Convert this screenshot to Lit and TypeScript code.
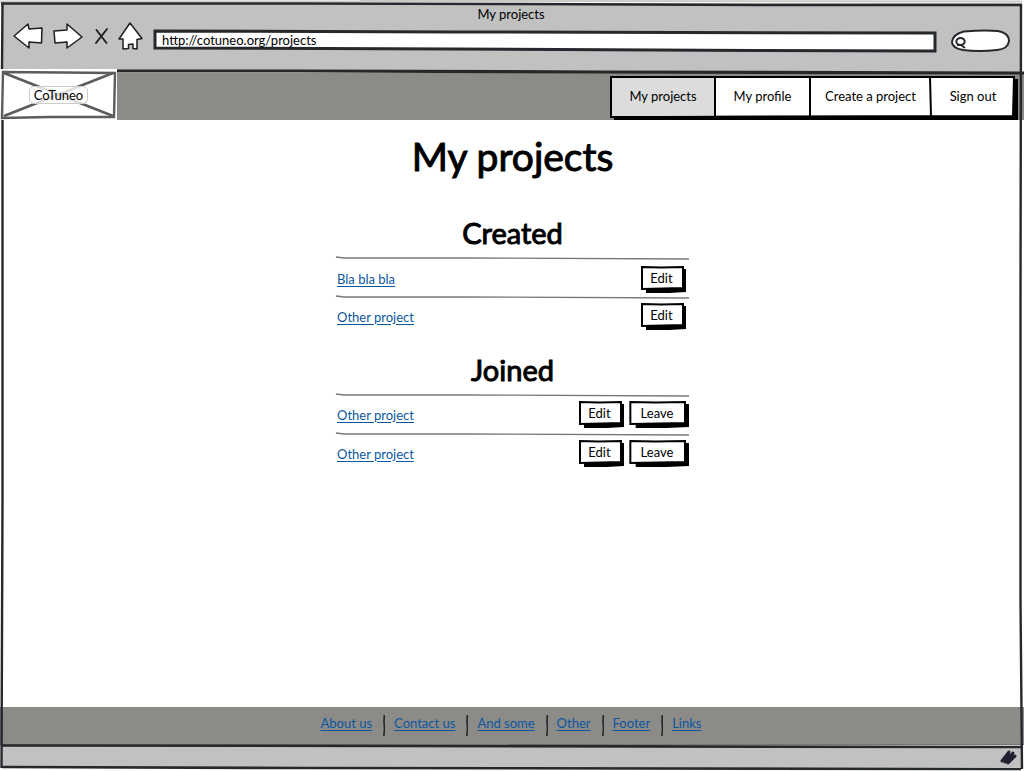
import { LitElement, html, svg, css } from "lit";
import type { SVGTemplateResult } from "lit";
import { customElement, property } from "lit/decorators.js";

/** Stretchable hand-drawn backdrop that lies under (or over) its parent's content. */
const sketch = (w: number, h: number, shapes: SVGTemplateResult) => html`
  <svg class="sketch" viewBox="0 0 ${w} ${h}" preserveAspectRatio="none" aria-hidden="true">${shapes}</svg>
`;

const sketchStyles = css`
  .sketch {
    position: absolute;
    inset: 0;
    width: 100%;
    height: 100%;
    overflow: visible;
    pointer-events: none;
  }
  .sketch * {
    vector-effect: non-scaling-stroke;
  }
`;

@customElement("sketch-button")
export class SketchButton extends LitElement {
  @property() label = "";

  static styles = [
    sketchStyles,
    css`
      :host {
        display: block;
      }
      button {
        position: relative;
        display: block;
        width: 100%;
        margin: 0;
        border: 0;
        padding: 0 4px 3px 0;
        height: 27px;
        background: none;
        color: #000;
        font: 13px/24px Lato, sans-serif;
        text-align: center;
        cursor: pointer;
      }
      .text {
        position: relative;
      }
    `,
  ];

  render() {
    return html`<button type="button">
      ${sketch(
        45,
        27,
        svg`<path d="M5 22 L42 22 L42 3 L45 3 L45 26 L28 27 L5 27 Z" fill="#000"/>
            <path d="M1 1 L20 1.500 L42 1 L42 22 L22 22.500 L1 23 Z" fill="#fff" stroke="#000" stroke-width="2"/>`
      )}
      <span class="text">${this.label}</span>
    </button>`;
  }
}

interface Project {
  name: string;
  actions: string[];
}

@customElement("project-section")
export class ProjectSection extends LitElement {
  @property() heading = "";
  @property({ attribute: false }) projects: Project[] = [];

  static styles = [
    sketchStyles,
    css`
      :host {
        display: block;
      }
      h2 {
        margin: 0 0 6px;
        font-size: 29px;
        line-height: 36px;
        font-weight: 400;
        text-align: center;
        -webkit-text-stroke: 1px #000;
      }
      ul {
        margin: 0;
        padding: 0;
        list-style: none;
      }
      li {
        position: relative;
        display: flex;
        align-items: center;
        justify-content: space-between;
        height: 39px;
        padding: 2px 0 0 1px;
        box-sizing: border-box;
      }
      .single {
        padding-right: 3px;
      }
      .single:first-child {
        padding-top: 5px;
      }
      a {
        position: relative;
        color: #0b57a0;
        text-underline-offset: 2px;
      }
      .actions {
        display: grid;
        grid-template-columns: 45px;
        grid-auto-columns: 60px;
        grid-auto-flow: column;
        gap: 5px;
      }
    `,
  ];

  render() {
    return html`
      <h2>${this.heading}</h2>
      <ul>
        ${this.projects.map(
          (p) => html`<li class=${p.actions.length === 1 ? "single" : ""}>
            ${sketch(
              353,
              39,
              svg`<path d="M0 0 L8 1 L130 1 L353 2" fill="none" stroke="#77777f" stroke-width="1.3"/>`
            )}
            <a href="#">${p.name}</a>
            <div class="actions">
              ${p.actions.map((a) => html`<sketch-button label=${a}></sketch-button>`)}
            </div>
          </li>`
        )}
      </ul>
    `;
  }
}

@customElement("app-root")
export class AppRoot extends LitElement {
  private nav = ["My projects", "My profile", "Create a project", "Sign out"];
  private links = ["About us", "Contact us", "And some", "Other", "Footer", "Links"];
  private created: Project[] = [
    { name: "Bla bla bla", actions: ["Edit"] },
    { name: "Other project", actions: ["Edit"] },
  ];
  private joined: Project[] = [
    { name: "Other project", actions: ["Edit", "Leave"] },
    { name: "Other project", actions: ["Edit", "Leave"] },
  ];

  static styles = [
    sketchStyles,
    css`
      :host {
        position: relative;
        display: flex;
        flex-direction: column;
        min-height: 100vh;
        background: #fff;
        color: #000;
        font: 13px/16px Lato, sans-serif;
      }
      .chrome {
        position: relative;
        height: 69px;
        padding: 6px 13px 0;
        box-sizing: border-box;
      }
      .title {
        position: relative;
        text-align: center;
        padding-right: 2px;
      }
      .toolbar {
        position: relative;
        display: flex;
        align-items: flex-start;
        height: 30px;
      }
      .tool {
        border: 0;
        padding: 0;
        margin: 0 10px 0 0;
        background: none;
        cursor: pointer;
      }
      .tool svg {
        display: block;
        overflow: visible;
      }
      .address,
      .search {
        position: relative;
        align-self: flex-end;
        height: 22px;
      }
      .address {
        flex: 1;
        margin-right: 14px;
      }
      .search {
        width: 60px;
      }
      input {
        position: relative;
        width: 100%;
        height: 20px;
        box-sizing: border-box;
        border: 0;
        outline: 0;
        padding: 0 9px;
        background: none;
        color: #000;
        font: inherit;
        display: block;
      }
      .search input {
        padding-left: 20px;
      }
      .site {
        position: relative;
        display: flex;
        justify-content: space-between;
        height: 51px;
      }
      .logo {
        position: relative;
        width: 117px;
        display: flex;
        align-items: center;
        justify-content: center;
        background: #fff;
        color: #000;
        text-decoration: none;
      }
      .logo span {
        position: relative;
        padding: 0 4px;
        border: 1px solid #ccc;
        border-radius: 5px;
        background: rgba(255, 255, 255, 0.8);
      }
      nav {
        position: relative;
        display: grid;
        grid-template-columns: 104px 95px 121px 84px;
        margin: 7px 6px 0 0;
        padding: 0 4px 4px 0;
      }
      nav a {
        position: relative;
        display: flex;
        align-items: center;
        justify-content: center;
        padding-left: 2px;
        color: #000;
        text-decoration: none;
      }
      main {
        flex: 1;
        width: 353px;
        max-width: 90%;
        margin: 0 auto;
        padding-left: 1px;
      }
      h1 {
        margin: 11px 0 34px;
        font-size: 39px;
        line-height: 50px;
        font-weight: 400;
        text-align: center;
        -webkit-text-stroke: 1px #000;
      }
      .block {
        margin-bottom: 17px;
      }
      footer {
        display: flex;
        justify-content: center;
        align-items: flex-start;
        height: 37px;
        padding: 8px 2px 0 0;
        box-sizing: border-box;
        background: #8d8b88;
      }
      footer a {
        color: #0b57a0;
        text-underline-offset: 2px;
      }
      .sep {
        width: 2px;
        height: 21px;
        margin: 0 9px 0 11px;
      }
      .status {
        position: relative;
        height: 27px;
        display: flex;
        justify-content: flex-end;
        padding: 6px 7px 0 0;
        box-sizing: border-box;
      }
      .grip {
        position: relative;
      }
    `,
  ];

  render() {
    return html`
      <header class="chrome">
        ${sketch(
          1024,
          69,
          svg`<path d="M2 3 L1022 3 L1021 69 L2 69 Z" fill="#c1c1c1"/>
              <path d="M0 1.5 L360 1.5 M360 1 L1022 1.5" stroke="#c9c9c6" stroke-width="2"/>
              <path d="M1 3.5 L300 3.5 L520 4 L760 5 L1022 5" fill="none" stroke="#25282c" stroke-width="2.4"/>`
        )}
        <div class="title">My projects</div>
        <div class="toolbar">
          <button class="tool" type="button" aria-label="Back">
            <svg width="30" height="28">
              <path d="M1 14 L15 2 L16 7 L29 6 L28.500 21 L16 20 L16 26 Z" fill="#fff" stroke="#1d1f22" stroke-width="1.500" stroke-linejoin="round"/>
            </svg>
          </button>
          <button class="tool" type="button" aria-label="Forward">
            <svg width="32" height="28">
              <path d="M1 9 L14 8 L14 2 L29 15 L14 26 L14 20 L2 21 Z" fill="#fff" stroke="#1d1f22" stroke-width="1.500" stroke-linejoin="round"/>
            </svg>
          </button>
          <button class="tool" type="button" aria-label="Stop">
            <svg width="13" height="28">
              <path d="M1.500 8 L11.500 21 M12 7 L1 21" fill="none" stroke="#1d1f22" stroke-width="1.900" stroke-linecap="round"/>
            </svg>
          </button>
          <button class="tool" type="button" aria-label="Home">
            <svg width="25" height="28">
              <path d="M12 1 L24 16.500 L19 17.500 L19 27 L15 26.500 L15 22 L10.500 22.500 L10.500 26.500 L5 27 L5 17 L1 17 Z" fill="#fff" stroke="#1d1f22" stroke-width="1.500" stroke-linejoin="round"/>
            </svg>
          </button>
          <div class="address">
            ${sketch(
              784,
              22,
              svg`<path d="M2 1 L300 2 L782 3 L782 21 L600 20.500 L300 19 L2 18 Z" fill="#fff" stroke="#25282c" stroke-width="3"/>`
            )}
            <input type="text" aria-label="Address" value="http://cotuneo.org/projects" />
          </div>
          <div class="search">
            ${sketch(
              60,
              22,
              svg`<path d="M13 1.500 Q32 0 47 1 Q58 3 58 11 Q57 19 46 20 Q28 22 12 20 Q1 18 1 12 Q2 4 13 1.500 Z" fill="#fff" stroke="#25282c" stroke-width="2"/>
                  <ellipse cx="9.500" cy="11.500" rx="4.200" ry="3.500" fill="none" stroke="#25282c" stroke-width="2"/>
                  <path d="M6 15 L10 15 L14 18" fill="none" stroke="#25282c" stroke-width="1.800"/>`
            )}
            <input type="text" aria-label="Search" />
          </div>
        </div>
      </header>

      <div class="site">
        ${sketch(
          1024,
          51,
          svg`<path d="M0 0 L1021 0 L1021 3 L0 3 Z" fill="#c1c1c1"/>
              <path d="M0 4 L1024 4 L1024 51 L0 51 Z" fill="#8d8b88"/>
              <path d="M100 2 L300 2 L600 3 L1024 4" fill="none" stroke="#25282a" stroke-width="3.200"/>`
        )}
        <a class="logo" href="#">
          ${sketch(
            117,
            51,
            svg`<path d="M4 4 L113 47 M113 4 L4 47" stroke="#5c5c5e" stroke-width="2.800"/>
                <path d="M3 3 L60 3.500 L115 4 L114 48 L50 48 L2 49 Z" fill="none" stroke="#5c5c5e" stroke-width="2.400"/>`
          )}
          <span>CoTuneo</span>
        </a>
        <nav>
          ${sketch(
            408,
            44,
            svg`<path d="M4 38 L404 38 L404 3 L408 3 L408 44 L4 44 Z" fill="#000"/>
                <path d="M1 1 L404 1 L403 40 L1 41 Z" fill="#fff" stroke="#000" stroke-width="2"/>
                <path d="M2 2 L104 2 L104 39 L2 40 Z" fill="#dcdcdc"/>
                <path d="M105 1 V40 M200 1 V40 M320 1 L321 40" stroke="#000" stroke-width="2"/>`
          )}
          ${this.nav.map((n) => html`<a href="#">${n}</a>`)}
        </nav>
      </div>

      <main>
        <h1>My projects</h1>
        <project-section class="block" heading="Created" .projects=${this.created}></project-section>
        <project-section class="block" heading="Joined" .projects=${this.joined}></project-section>
      </main>

      <footer>
        ${this.links.map(
          (l, i) => html`${i
              ? html`<svg class="sep" viewBox="0 0 2 21" aria-hidden="true">
                  <path d="M1.300 0 L1 7 L1.500 14 L0.800 21" fill="none" stroke="#25252b" stroke-width="1.600" />
                </svg>`
              : ""}<a href="#">${l}</a>`
        )}
      </footer>

      <div class="status">
        ${sketch(
          1024,
          27,
          svg`<path d="M2 1 L1021 2 L1021 23 L2 23 Z" fill="#c1c1c1"/>
              <path d="M0 0.500 L1024 0.500" stroke="#77776f" stroke-width="1"/>
              <path d="M2 1.500 L400 2 L1021 3 M2 23 L300 24 L1021 25" fill="none" stroke="#25282c" stroke-width="2.600"/>`
        )}
        <svg class="grip" width="17" height="15" aria-hidden="true">
          <path d="M2 11 L9 2 L5 12 L13 3 L8 13 L15 6" fill="none" stroke="#22202e" stroke-width="3" stroke-linecap="round" stroke-linejoin="round"/>
        </svg>
      </div>

      ${sketch(
        1024,
        771,
        svg`<path d="M2.500 3 L2 69 M2.500 120 L2.500 500 L1.500 768 M1021 4 L1020.500 300 L1020.500 600 L1022 769" fill="none" stroke="#25282c" stroke-width="2.400"/>`
      )}
    `;
  }
}
